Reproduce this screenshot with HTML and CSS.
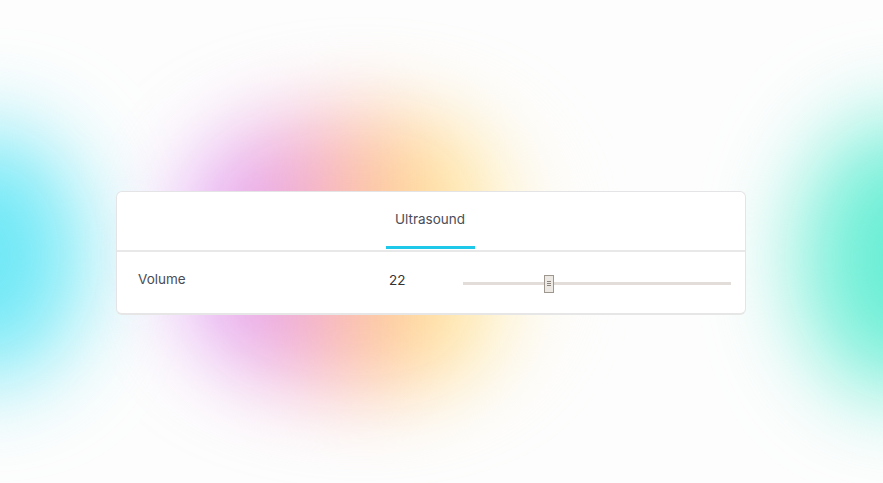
FILE: index.html
```html
<!DOCTYPE html>
<html>
<head>
<meta charset="utf-8">
<link rel="stylesheet" href="styles.css">
</head>
<body>
<div class="bg">
  <div class="blob warm"></div>
  <div class="blob cyan"></div>
  <div class="blob teal"></div>
</div>
<div class="page">
  <div class="card">
    <div class="tabs">
      <div class="tab active">Ultrasound</div>
    </div>
    <div class="row">
      <div class="label">Volume</div>
      <div class="value">22</div>
      <div class="slider">
        <div class="track"></div>
        <div class="thumb" style="left: 81px"><span></span><span></span><span></span></div>
      </div>
    </div>
  </div>
</div>
</body>
</html>
```

FILE: styles.css
```css
html, body {
  margin: 0;
  padding: 0;
  width: 883px;
  height: 483px;
  overflow: hidden;
  background: #fdfdfd;
  font-family: Inter, "Noto Sans", sans-serif;
}

.bg {
  position: fixed;
  inset: 0;
  z-index: 0;
  overflow: hidden;
}

.blob {
  position: absolute;
  border-radius: 50%;
}

.warm {
  left: 150px;
  top: 110px;
  width: 420px;
  height: 285px;
  background: linear-gradient(90deg, rgba(222,160,245,0.0) 0%, #e2a6f5 18%, #f2aed6 35%, #ffc99c 55%, #ffe59c 70%, rgba(255,245,210,0.3) 88%, rgba(255,255,255,0) 100%);
  filter: blur(40px);
}

.cyan {
  left: -110px;
  top: 130px;
  width: 195px;
  height: 250px;
  background: #6fe8f6;
  filter: blur(45px);
}

.teal {
  left: 800px;
  top: 120px;
  width: 200px;
  height: 275px;
  background: #6aeed5;
  filter: blur(45px);
}

.page {
  position: relative;
  z-index: 1;
  padding-top: 191px;
  padding-left: 116px;
}

.card {
  width: 630px;
  background: #ffffff;
  border: 1px solid #e4e4e6;
  border-bottom: 2px solid #e6e6e6;
  border-radius: 6px;
  box-sizing: border-box;
}

.tabs {
  height: 60px;
  display: flex;
  justify-content: center;
  border-bottom: 2px solid #e8e8e8;
  box-sizing: border-box;
}

.tab {
  width: 89px;
  margin-left: -2px;
  display: flex;
  justify-content: center;
  padding-top: 19px;
  box-sizing: border-box;
  font-size: 13.5px;
  color: #4a4d5a;
  height: 57px;
}

.tab.active {
  border-bottom: 3px solid #1ec8e8;
  height: 57px;
}

.row {
  height: 61px;
  display: flex;
  align-items: center;
}

.label {
  width: 251px;
  padding-left: 21px;
  font-size: 13.5px;
  color: #4a4c55;
  margin-top: -7px;
}

.value {
  width: 74px;
  font-size: 13.5px;
  color: #333;
  margin-top: -5px;
}

.slider {
  position: relative;
  width: 268px;
  height: 18px;
  display: flex;
  align-items: center;
  margin-top: 2px;
}

.track {
  width: 100%;
  height: 3px;
  background: #e2ddd8;
}

.thumb {
  position: absolute;
  top: 0;
  width: 10px;
  height: 18px;
  box-sizing: border-box;
  border: 1px solid #9d978f;
  background: #ece8e3;
  display: flex;
  flex-direction: column;
  align-items: center;
  justify-content: center;
  gap: 1px;
}

.thumb span {
  width: 4px;
  height: 1px;
  background: #8a847d;
}
```
